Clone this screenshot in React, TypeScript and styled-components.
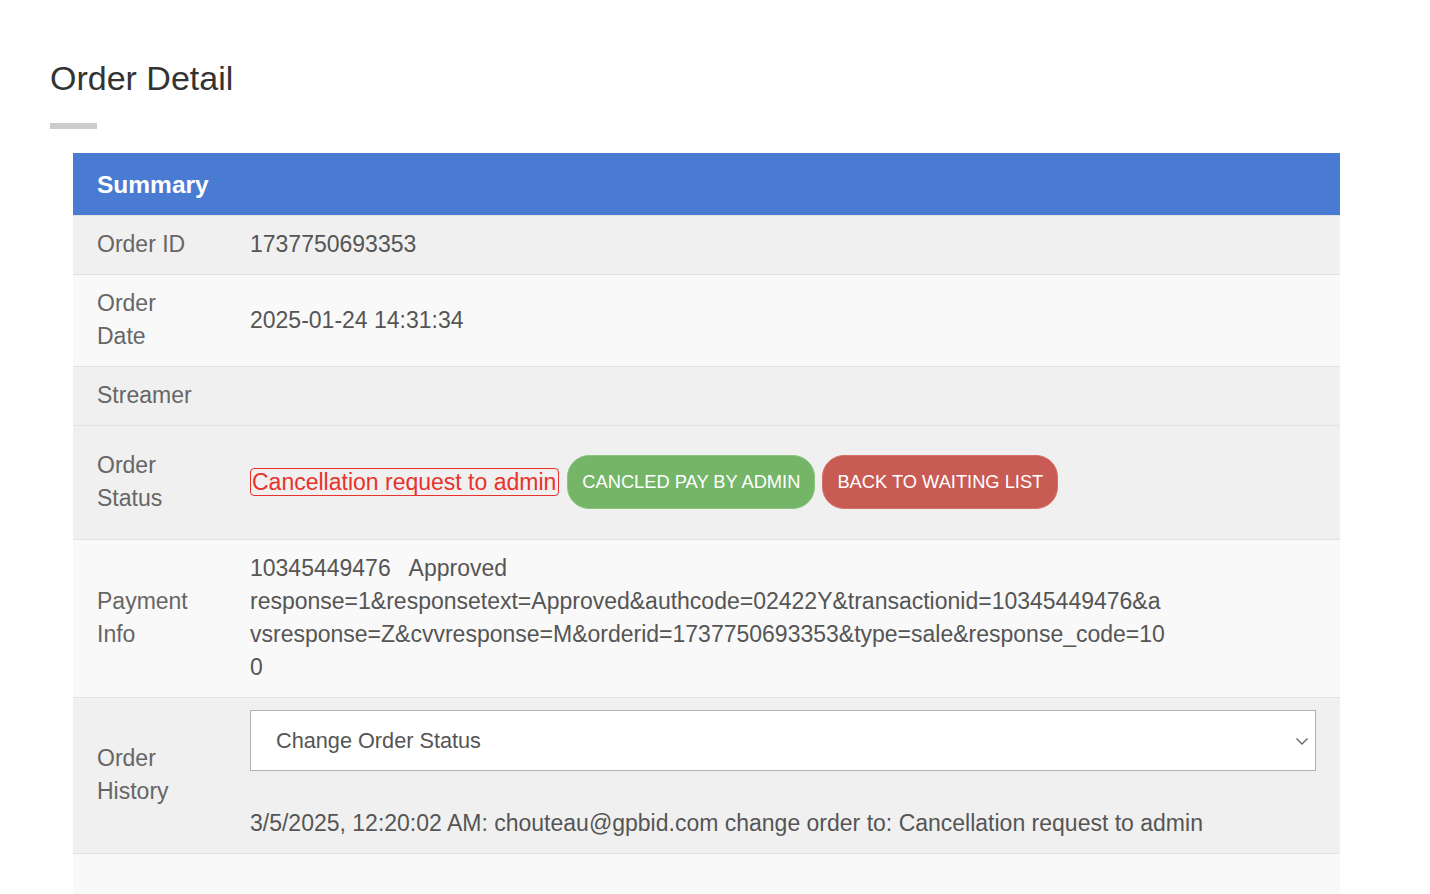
import React from "react";
import styled, { createGlobalStyle } from "styled-components";

const GlobalStyle = createGlobalStyle`
  html, body {
    margin: 0;
    padding: 0;
    background: #ffffff;
    font-family: "Liberation Sans", Arial, Helvetica, sans-serif;
  }
`;

const Page = styled.div`
  padding: 60px 90px 0 50px;
`;

const Title = styled.h1`
  margin: 0;
  font-size: 34px;
  line-height: 37px;
  font-weight: 400;
  color: #333;
`;

const TitleBar = styled.div`
  width: 47px;
  height: 6px;
  margin-top: 26px;
  background: #cccccc;
`;

const Table = styled.table`
  margin: 24px 0 0 23px;
  width: 1267px;
  border-collapse: collapse;
  font-size: 23px;
  line-height: 33px;
`;

const HeadCell = styled.th`
  height: 62px;
  padding: 0 24px;
  text-align: left;
  background: #4a7bd3;
  color: #fff;
  font-size: 24.5px;
  font-weight: 700;
`;

const Row = styled.tr<{ $shade: "dark" | "light" }>`
  background: ${({ $shade }) => ($shade === "dark" ? "#f0f0f0" : "#f9f9f9")};
  & > td {
    border-top: 1px solid #e2e2e2;
  }
`;

const LabelCell = styled.td`
  width: 105px;
  padding: 12px 24px 13px;
  color: #666;
  vertical-align: middle;
`;

const ValueCell = styled.td`
  padding: 12px 24px 13px;
  color: #555;
  vertical-align: middle;
`;

const EmptyCell = styled.td`
  height: 60px;
`;

const StatusLine = styled.div`
  display: flex;
  align-items: center;
  gap: 7px;
  padding: 17px 0;
`;

const StatusTag = styled.span`
  border: 1px solid #e8322b;
  border-radius: 4px;
  color: #e8322b;
  font-size: 23px;
  line-height: 26px;
  padding: 0 2px 0 1px;
  margin-right: 1px;
`;

const ActionButton = styled.button<{ $tone: "green" | "red" }>`
  height: 54px;
  padding: 0 14px;
  border-radius: 22px;
  border: 1px solid ${({ $tone }) => ($tone === "green" ? "#8cc47f" : "#d7716b")};
  background: ${({ $tone }) => ($tone === "green" ? "#74b567" : "#c95b55")};
  color: #fff;
  font-family: "Liberation Sans", Arial, sans-serif;
  font-size: 18.3px;
  text-transform: uppercase;
  cursor: pointer;
`;

const PayLine = styled.span`
  display: block;
  white-space: pre;
`;

const SelectWrap = styled.div`
  position: relative;
  height: 61px;
`;

const Select = styled.select`
  width: 100%;
  height: 61px;
  box-sizing: border-box;
  appearance: none;
  border: 1px solid #b0b0b0;
  border-radius: 0;
  background: #fff;
  padding: 0 40px 0 25px;
  color: #555;
  font-family: "Liberation Sans", Arial, sans-serif;
  font-size: 21.7px;
`;

const Chevron = styled.svg`
  position: absolute;
  right: 7px;
  top: 26px;
  pointer-events: none;
`;

const HistoryText = styled.div`
  margin-top: 36px;
`;

const rows: { label: string; value: string; shade: "dark" | "light" }[] = [
  { label: "Order ID", value: "1737750693353", shade: "dark" },
  { label: "Order Date", value: "2025-01-24 14:31:34", shade: "light" },
  { label: "Streamer", value: "", shade: "dark" },
];

const paymentLines = [
  "10345449476   Approved",
  "response=1&responsetext=Approved&authcode=02422Y&transactionid=10345449476&a",
  "vsresponse=Z&cvvresponse=M&orderid=1737750693353&type=sale&response_code=10",
  "0",
];

export default function App() {
  return (
    <>
      <GlobalStyle />
      <Page>
        <Title>Order Detail</Title>
        <TitleBar />
        <Table>
          <thead>
            <tr>
              <HeadCell colSpan={2}>Summary</HeadCell>
            </tr>
          </thead>
          <tbody>
            {rows.map((r) => (
              <Row key={r.label} $shade={r.shade}>
                <LabelCell>{r.label}</LabelCell>
                <ValueCell>{r.value}</ValueCell>
              </Row>
            ))}
            <Row $shade="dark">
              <LabelCell>Order Status</LabelCell>
              <ValueCell>
                <StatusLine>
                  <StatusTag>Cancellation request to admin</StatusTag>
                  <ActionButton $tone="green">Cancled pay by admin</ActionButton>
                  <ActionButton $tone="red">Back to waiting list</ActionButton>
                </StatusLine>
              </ValueCell>
            </Row>
            <Row $shade="light">
              <LabelCell>Payment Info</LabelCell>
              <ValueCell>
                {paymentLines.map((l, i) => (
                  <PayLine key={i}>{l}</PayLine>
                ))}
              </ValueCell>
            </Row>
            <Row $shade="dark">
              <LabelCell>Order History</LabelCell>
              <ValueCell>
                <SelectWrap>
                  <Select defaultValue="">
                    <option value="">Change Order Status</option>
                    <option value="waiting">Back to waiting list</option>
                    <option value="cancel">Cancled pay by admin</option>
                  </Select>
                  <Chevron width="14" height="10" viewBox="0 0 14 10">
                    <path d="M1.5 2.5 L7 8 L12.5 2.5" fill="none" stroke="#666" strokeWidth="1.4" />
                  </Chevron>
                </SelectWrap>
                <HistoryText>
                  3/5/2025, 12:20:02 AM: chouteau@gpbid.com change order to: Cancellation request to admin
                </HistoryText>
              </ValueCell>
            </Row>
            <Row $shade="light">
              <EmptyCell colSpan={2} />
            </Row>
          </tbody>
        </Table>
      </Page>
    </>
  );
}
